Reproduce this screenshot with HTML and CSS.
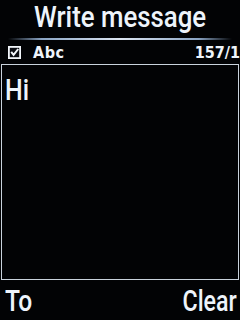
FILE: index.html
```html
<!DOCTYPE html>
<html>
<head>
<meta charset="utf-8">
<link rel="stylesheet" href="styles.css">
</head>
<body>
<div class="screen">
  <header class="title"><span class="narrow">Write message</span></header>
  <div class="sep"></div>
  <div class="status">
    <svg class="check" width="13" height="13" viewBox="0 0 13 13">
      <rect x="0.9" y="0.9" width="11.2" height="11.2" fill="#0a0c12" stroke="#f2f6fb" stroke-width="1.8"/>
      <path d="M3.2 5.8 L5.6 8.8 L10.2 3" fill="none" stroke="#f2f6fb" stroke-width="2"/>
    </svg>
    <span class="mode">Abc</span>
    <span class="count">157/1</span>
  </div>
  <div class="editor"><span class="narrow left">Hi</span></div>
  <footer class="softkeys">
    <span class="narrow key left">To</span>
    <span class="narrow key right">Clear</span>
  </footer>
</div>
</body>
</html>
```

FILE: styles.css
```css
html, body {
  margin: 0;
  padding: 0;
  background: #000;
}
.screen {
  width: 240px;
  height: 320px;
  overflow: hidden;
  background: #020305;
  color: #eef4fb;
  font-family: Roboto, "Liberation Sans", Arial, sans-serif;
  font-weight: 500;
  display: flex;
  flex-direction: column;
}
.narrow {
  display: inline-block;
  transform: scaleX(0.86);
}
.narrow.left {
  transform-origin: left center;
}
.narrow.right {
  transform-origin: right center;
}
.title {
  height: 38px;
  font-size: 30px;
  line-height: 34px;
  text-align: center;
  white-space: nowrap;
}
.sep {
  height: 2px;
  margin: 0 8px;
  background: linear-gradient(to right, rgba(120,150,190,0), #8aa4c4 15%, #dde6f2 50%, #8aa4c4 85%, rgba(120,150,190,0));
}
.status {
  height: 24px;
  display: flex;
  align-items: center;
  padding-left: 8px;
  font-family: "DejaVu Sans", sans-serif;
  font-stretch: condensed;
  font-weight: bold;
  font-size: 16px;
}
.check {
  display: block;
}
.mode {
  margin-left: 12px;
  letter-spacing: 0.5px;
}
.count {
  margin-left: auto;
  white-space: nowrap;
}
.editor {
  height: 216px;
  margin: 0 1px;
  border: 1px solid #c9d2dc;
  font-size: 29px;
  line-height: 34px;
  padding: 8px 0 0 3px;
  box-sizing: border-box;
}
.softkeys {
  flex: 1;
  display: flex;
  justify-content: space-between;
  align-items: center;
  padding: 2px 3px 0 5px;
  font-size: 29px;
}
.key.left {
  transform: scaleX(0.85);
}
.key.right {
  transform: scaleX(0.8);
}
```
